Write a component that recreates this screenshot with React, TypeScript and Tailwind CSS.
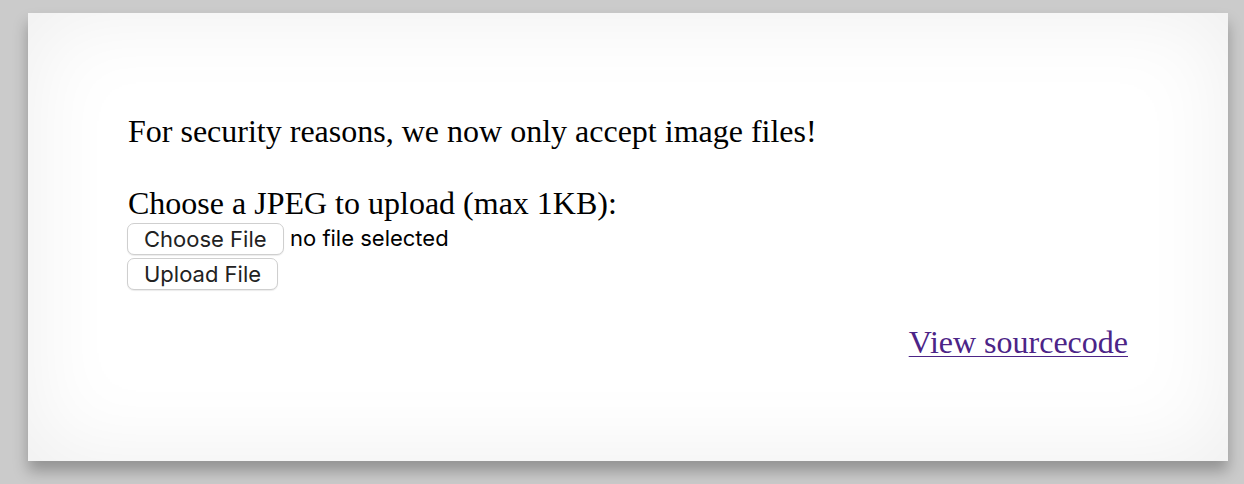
export default function App() {
  return (
    <div className="min-h-[484px] w-[1244px] bg-[#cbcbcb] pt-[13px] pl-[28px]">
      <div className="w-[1200px] h-[448px] bg-white shadow-[inset_0_0_90px_rgba(0,0,0,0.07),0_10px_14px_rgba(0,0,0,0.28)] px-[100px] pt-[100px] flex flex-col">
        <div className="font-['Liberation_Serif','Times_New_Roman',serif] text-[32px] leading-[36px] text-black">
          <div>For security reasons, we now only accept image files!</div>
          <div className="h-[36px]" />
          <div>Choose a JPEG to upload (max 1KB):</div>
        </div>
        <div className="mt-[1px] flex items-center font-['Inter',sans-serif] text-[22px] text-black">
          <button className="h-[32px] w-[157px] -ml-px rounded-[7px] border border-[#cfcfcf] bg-white shadow-[0_1px_1px_rgba(0,0,0,0.08)] text-[#222] text-left pl-[16px] leading-[30px]">
            Choose File
          </button>
          <span className="ml-[6px]">no file selected</span>
        </div>
        <div className="mt-[3px] flex font-['Inter',sans-serif] text-[22px]">
          <button className="h-[32px] w-[151px] -ml-px rounded-[7px] border border-[#cfcfcf] bg-white shadow-[0_1px_1px_rgba(0,0,0,0.08)] text-[#222] text-left pl-[16px] leading-[30px]">
            Upload File
          </button>
        </div>
        <div className="mt-[34px] flex justify-end font-['Liberation_Serif','Times_New_Roman',serif] text-[32px] leading-[36px]">
          <a href="#" className="text-[#4c2487] underline underline-offset-[3px] decoration-1">
            View sourcecode
          </a>
        </div>
      </div>
    </div>
  );
}
